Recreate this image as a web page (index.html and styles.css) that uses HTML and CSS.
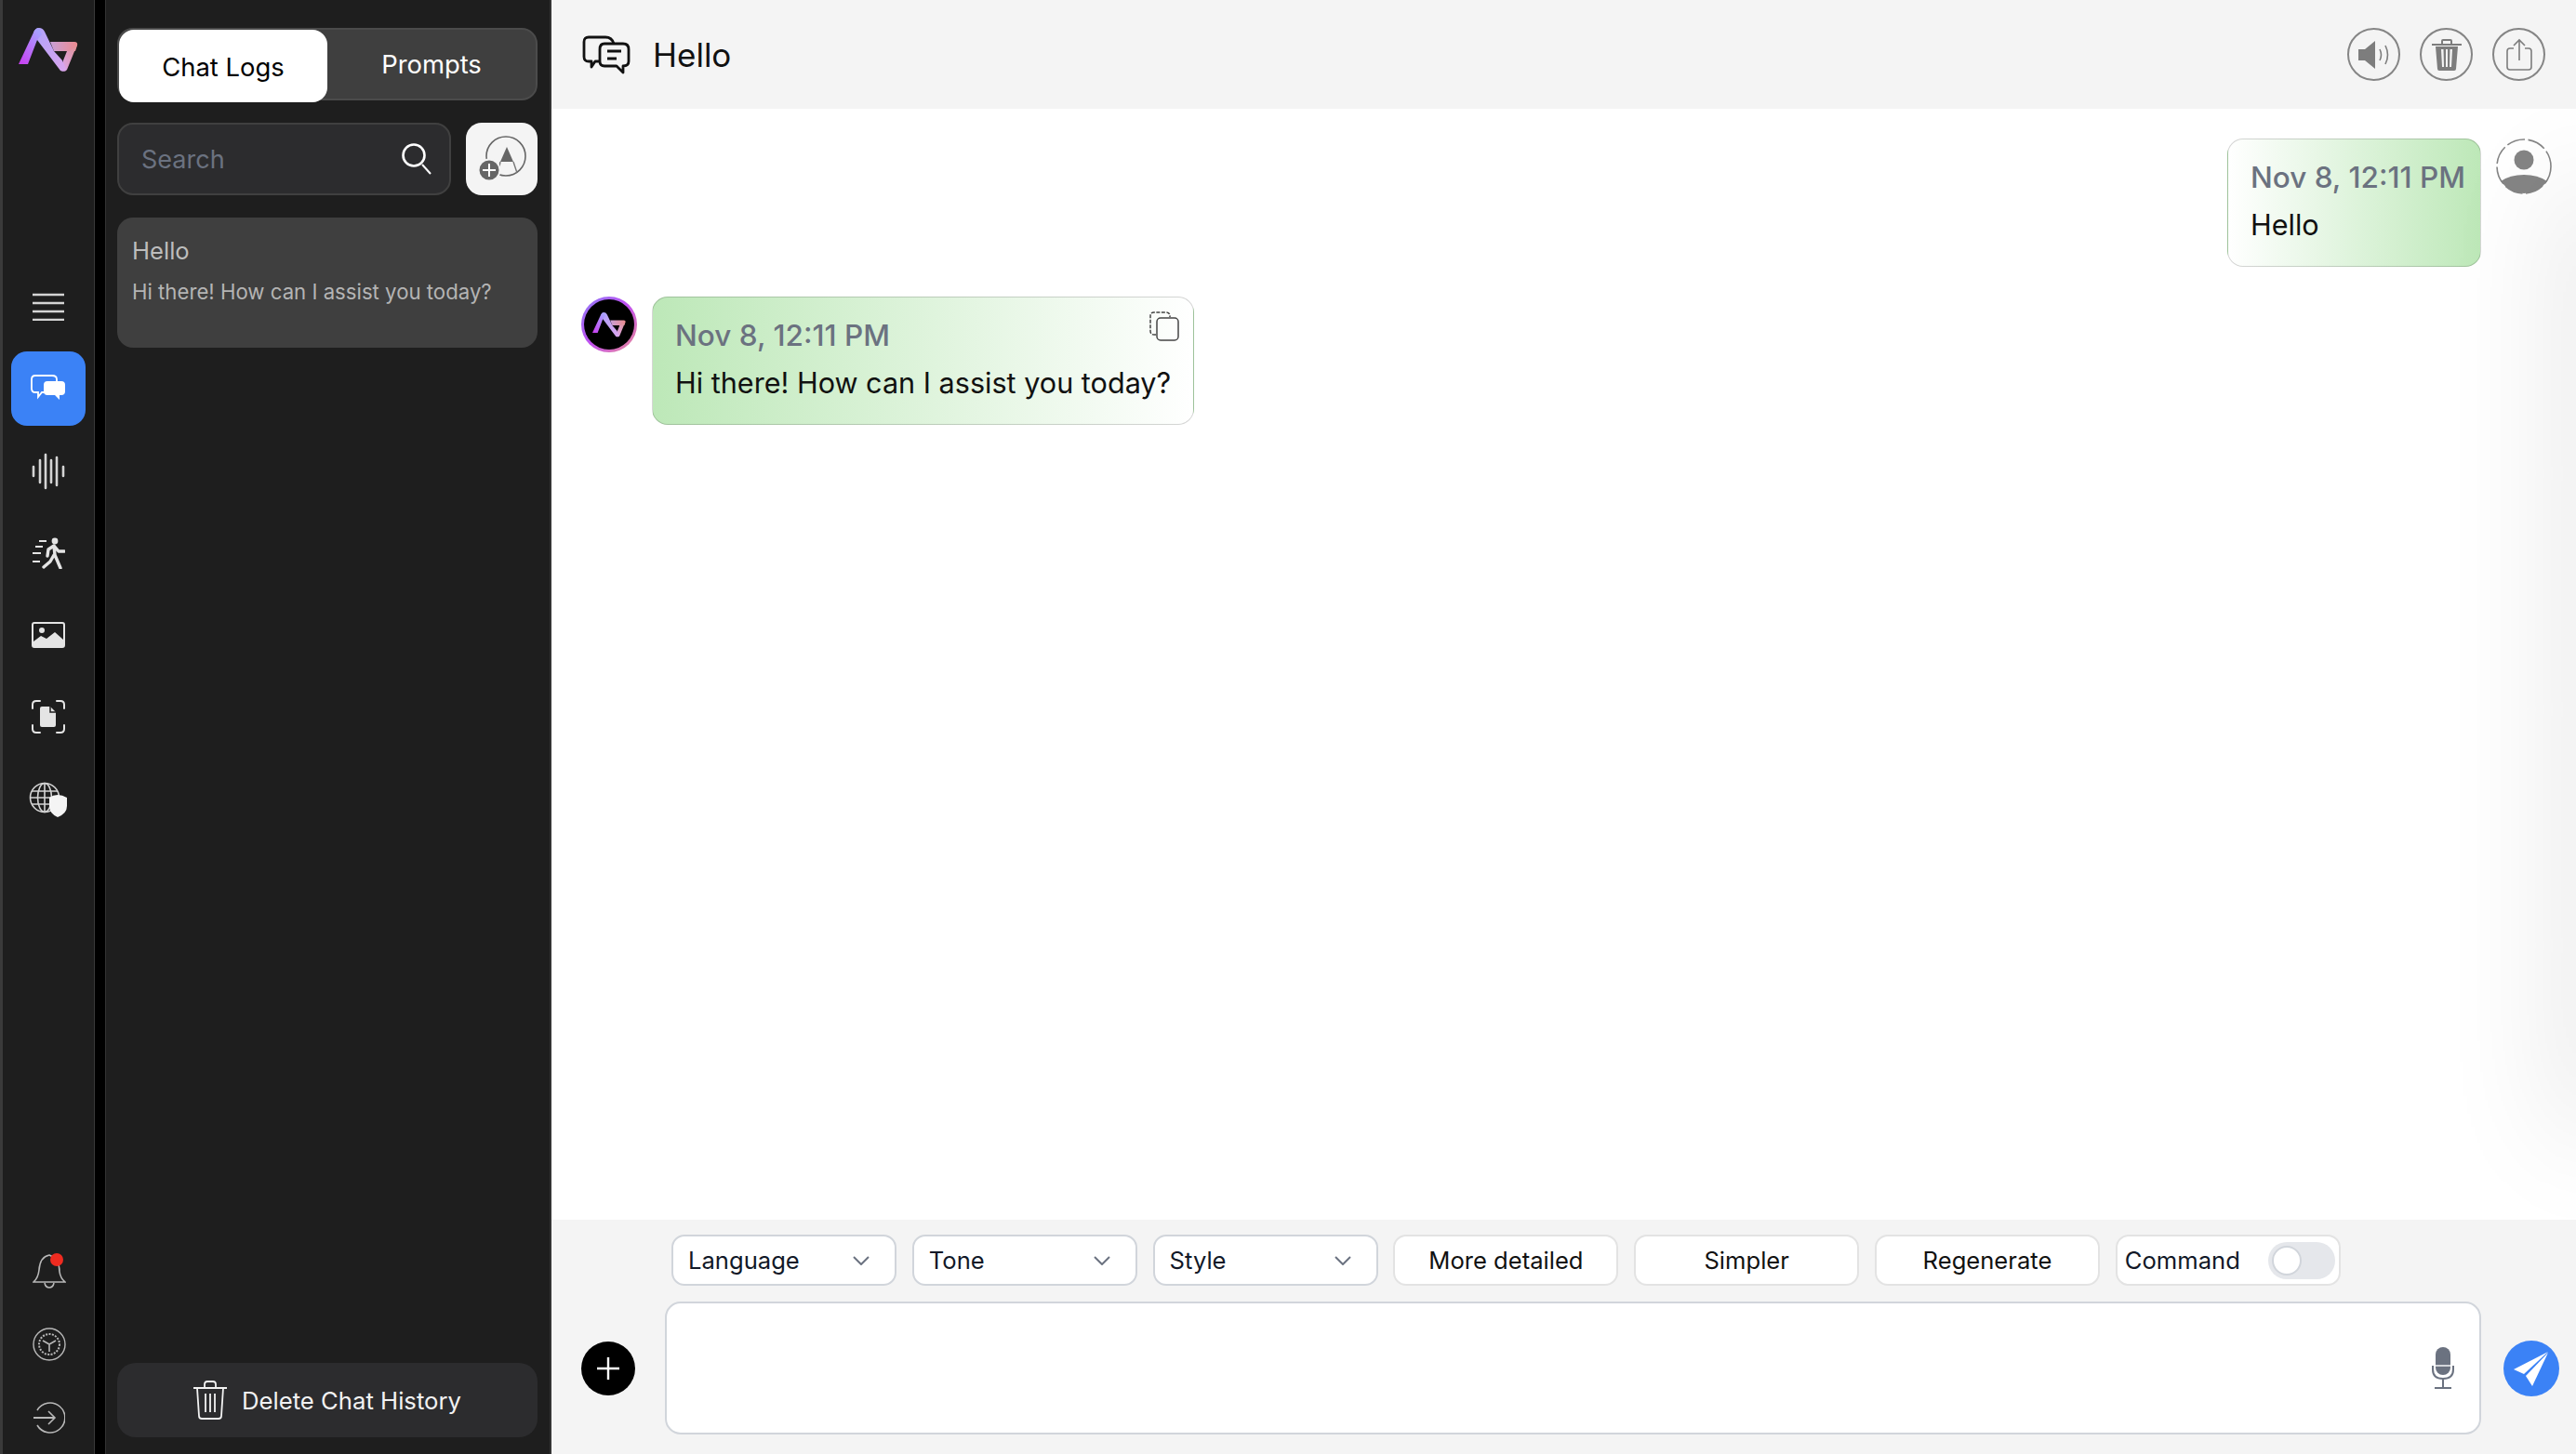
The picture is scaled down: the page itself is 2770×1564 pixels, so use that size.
FILE: index.html
```html
<!DOCTYPE html>
<html lang="en">
<head>
    <meta charset="UTF-8">
    <title>Chat</title>
    <link rel="stylesheet" href="styles.css">
</head>
<body>
    <svg class="defs" width="0" height="0">
        <defs>
            <linearGradient id="legA" x1="0" y1="1" x2="0.7" y2="0">
                <stop offset="0" stop-color="#c93cf0"/>
                <stop offset="1" stop-color="#a8a0ff"/>
            </linearGradient>
            <linearGradient id="legB" x1="0" y1="0" x2="1" y2="1">
                <stop offset="0" stop-color="#aea2fb"/>
                <stop offset="1" stop-color="#dba6ee"/>
            </linearGradient>
            <linearGradient id="legC" x1="0" y1="0" x2="1" y2="0">
                <stop offset="0" stop-color="#c79fd8"/>
                <stop offset="1" stop-color="#ec8a8e"/>
            </linearGradient>
            <linearGradient id="legD" x1="0" y1="1" x2="1" y2="0">
                <stop offset="0" stop-color="#dba6ee"/>
                <stop offset="1" stop-color="#e0908f"/>
            </linearGradient>
            <symbol id="logo" viewBox="0 0 64 48">
                <path d="M34 15H60Q64 15 63 19L61 25H38Z" fill="url(#legC)"/>
                <path d="M63 18L52 45Q50 48 47 46L48 35L52 25H55Z" fill="url(#legD)"/>
                <path d="M22 0Q26 0 28 4L38 25L47 35L51 44Q49 48 45 46L20 13L16 5Q18 0 22 0Z" fill="url(#legB)"/>
                <path d="M0 39L16 5Q18 0 22 0L25 7L20 13L10 39Z" fill="url(#legA)"/>
            </symbol>
        </defs>
    </svg>

    <div class="app">
        <nav class="rail">
            <a class="rail-logo"><svg width="64" height="48"><use href="#logo"/></svg></a>
            <div class="rail-top">
                <a class="rail-item">
                    <svg width="36" height="30" viewBox="0 0 36 30" fill="none" stroke="#d4d4d4" stroke-width="2.4"><path d="M1 2H35M1 11H35M1 20H35M1 29H35"/></svg>
                </a>
                <a class="rail-item active">
                    <svg width="38" height="30" viewBox="0 0 38 30" fill="none" stroke="#fff" stroke-width="1.8">
                        <path d="M5 1H23Q28 1 28 5V15Q28 19 23 19H12L8 24V19H5Q1 19 1 15V5Q1 1 5 1Z"/>
                        <path d="M18 7H33Q37 7 37 11V18Q37 22 33 22H31L31 27L26 22H18Q14 22 14 18V11Q14 7 18 7Z" fill="#fff" stroke="none"/>
                    </svg>
                </a>
                <a class="rail-item">
                    <svg width="36" height="40" viewBox="0 0 36 40" fill="none" stroke="#d4d4d4" stroke-width="2.6" stroke-linecap="round"><path d="M2 15V25M9 8V32M15 2V38M21 8V32M27 5V35M34 15V25"/></svg>
                </a>
                <a class="rail-item">
                    <svg width="36" height="34" viewBox="0 0 36 34" fill="none" stroke="#e4e4e4" stroke-width="2">
                        <circle cx="25" cy="4" r="3.4" fill="#e4e4e4" stroke="none"/>
                        <path d="M8 4H16M4 10H12M1 17H10M1 26H9"/>
                        <path d="M24 9L18 13L17 20M24 9L25 19L31 33M24 9L29 15H35M24 19L20 26L13 32" stroke-width="3.4" stroke-linecap="round" stroke-linejoin="round"/>
                    </svg>
                </a>
                <a class="rail-item">
                    <svg width="36" height="28" viewBox="0 0 36 28" fill="none">
                        <rect x="1" y="1" width="34" height="26" rx="2" stroke="#e4e4e4" stroke-width="2"/>
                        <circle cx="11" cy="9" r="3" fill="#e4e4e4"/>
                        <path d="M2 26V21L10 15L16 18L25 11L34 19V26Z" fill="#e4e4e4"/>
                    </svg>
                </a>
                <a class="rail-item">
                    <svg width="36" height="36" viewBox="0 0 36 36" fill="none">
                        <path d="M1 9V5Q1 1 5 1H9M27 1H31Q35 1 35 5V9M35 27V31Q35 35 31 35H27M9 35H5Q1 35 1 31V27" stroke="#e4e4e4" stroke-width="2" stroke-linecap="round"/>
                        <path d="M11 7H20L26 13V27Q26 29 24 29H11Q9 29 9 27V9Q9 7 11 7Z" fill="#e4e4e4"/>
                        <path d="M20 7V13H26" fill="none" stroke="#1e1e1e" stroke-width="1.5"/>
                    </svg>
                </a>
                <a class="rail-item">
                    <svg width="42" height="38" viewBox="0 0 42 38" fill="none" stroke="#d4d4d4" stroke-width="1.6">
                        <circle cx="17" cy="17" r="15.5"/>
                        <ellipse cx="17" cy="17" rx="7.5" ry="15.5"/>
                        <path d="M17 2V32M3 10H31M2 17H32M3 24H31"/>
                        <path d="M31 14Q36 14 41 17V26Q41 34 31 38Q22 34 22 26V17Q26 14 31 14Z" fill="#f4f4f4" stroke="none"/>
                    </svg>
                </a>
            </div>
            <div class="rail-bottom">
                <a class="rail-sm">
                    <svg width="36" height="38" viewBox="0 0 36 38" fill="none" stroke="#b8b8b8" stroke-width="1.6">
                        <path d="M1 31H35Q30 27 29 20Q29 6 18 2Q8 4 7 18Q6 27 1 31Z"/>
                        <path d="M13 32Q14 37 18 37Q22 37 23 32"/>
                    </svg>
                    <span class="dot"></span>
                </a>
                <a class="rail-sm">
                    <svg width="36" height="36" viewBox="0 0 36 36" fill="none" stroke="#b8b8b8" stroke-width="1.4">
                        <circle cx="18" cy="18" r="17"/>
                        <circle cx="18" cy="18" r="11" stroke-width="2" stroke-dasharray="2 1.4"/>
                        <path d="M18 18L25 14M18 18L11 14M18 18V26" stroke-width="1.6"/>
                    </svg>
                </a>
                <a class="rail-sm">
                    <svg width="34" height="34" viewBox="0 0 34 34" fill="none" stroke="#b8b8b8" stroke-width="1.6">
                        <path d="M4 9A16 16 0 1 1 4 25"/>
                        <path d="M0 17H22" stroke-width="2"/>
                        <path d="M16 10L23 17L16 24"/>
                    </svg>
                </a>
            </div>
        </nav>

        <aside class="panel">
            <div class="tabs">
                <a class="tab on">Chat Logs</a>
                <a class="tab">Prompts</a>
            </div>
            <div class="search-row">
                <div class="search">
                    <input class="search-input" placeholder="Search">
                    <svg width="34" height="36" viewBox="0 0 34 36" fill="none" stroke="#fff">
                        <circle cx="14" cy="14" r="11.5" stroke-width="2.6"/>
                        <path d="M23 24L32 34" stroke-width="2"/>
                    </svg>
                </div>
                <a class="new-chat">
                    <svg width="52" height="50" viewBox="0 0 52 50" fill="none">
                        <circle cx="30" cy="22" r="21" stroke="#666" stroke-width="1.6"/>
                        <path d="M31 12L38 28H24Z" fill="#666"/>
                        <path d="M24 28L21 42M38 28L42 40" stroke="#777" stroke-width="1.4"/>
                        <circle cx="12" cy="37" r="11.5" fill="#666" stroke="#f4f4f4" stroke-width="2"/>
                        <path d="M12 30V44M5 37H19" stroke="#fff" stroke-width="2"/>
                    </svg>
                </a>
            </div>
            <div class="log-card">
                <div class="log-title">Hello</div>
                <div class="log-sub">Hi there! How can I assist you today?</div>
            </div>
            <a class="delete-all">
                <svg width="36" height="42" viewBox="0 0 36 42" fill="none" stroke="#f2f2f2" stroke-width="1.8">
                    <path d="M0 8H36M12 8V4Q12 1 15 1H21Q24 1 24 4V8M4 8L6 38Q6 41 9 41H27Q30 41 30 38L32 8M13 14V34M18 14V34M23 14V34"/>
                </svg>
                Delete Chat History
            </a>
        </aside>

        <main class="main">
            <header class="head">
                <div class="head-title">
                    <svg width="52" height="42" viewBox="0 0 52 42" fill="none" stroke="#111" stroke-width="2.8" stroke-linejoin="round">
                        <path d="M20 28H14L10 34V28H7Q2 28 2 23V7Q2 2 7 2H25Q32 2 34 9"/>
                        <path d="M24 9H44Q50 9 50 15V28Q50 33 44 33V40L37 33H24Q19 33 19 28V15Q19 9 24 9Z"/>
                        <path d="M27 17H42M27 25H37"/>
                    </svg>
                    <span>Hello</span>
                </div>
                <div class="head-btns">
                    <a class="round-btn">
                        <svg width="36" height="34" viewBox="0 0 36 34" fill="#7d7d7d">
                            <path d="M1 11H8L19 2V32L8 23H1Z"/>
                            <path d="M24 11Q27 17 24 23M30 7Q35 17 30 27" fill="none" stroke="#7d7d7d" stroke-width="1.6"/>
                        </svg>
                    </a>
                    <a class="round-btn">
                        <svg width="32" height="36" viewBox="0 0 32 36" fill="#7d7d7d">
                            <path d="M0 6H32V8H0ZM10 6V3Q10 1 12 1H20Q22 1 22 3V6H20V3H12V6Z"/>
                            <path d="M4 9H28L26 33Q26 35 24 35H8Q6 35 6 33ZM10 12L11 31H13L12.5 12ZM15 12V31H17V12ZM19.5 12L19 31H21L22 12Z" fill-rule="evenodd"/>
                        </svg>
                    </a>
                    <a class="round-btn">
                        <svg width="28" height="36" viewBox="0 0 28 36" fill="none" stroke="#7d7d7d" stroke-width="1.6">
                            <path d="M8 11H4Q1 11 1 14V31Q1 34 4 34H24Q27 34 27 31V14Q27 11 24 11H20"/>
                            <path d="M14 24V2M8 8L14 2L20 8"/>
                        </svg>
                    </a>
                </div>
            </header>

            <section class="messages">
                <div class="msg mine">
                    <div class="bubble to-left">
                        <div class="stamp">Nov 8, 12:11 PM</div>
                        <div class="text">Hello</div>
                    </div>
                    <svg class="avatar" width="60" height="60" viewBox="0 0 60 60">
                        <circle cx="30" cy="30" r="29" fill="none" stroke="#858585" stroke-width="1.6" stroke-dasharray="20 3.5"/>
                        <circle cx="30" cy="23" r="10.5" fill="#858585"/>
                        <path d="M5 46Q15 39 30 39Q45 39 55 46Q45 59 30 59Q15 59 5 46Z" fill="#858585"/>
                    </svg>
                </div>
                <div class="msg">
                    <div class="avatar bot">
                        <svg width="36" height="27"><use href="#logo"/></svg>
                    </div>
                    <div class="bubble to-right">
                        <div class="stamp">Nov 8, 12:11 PM</div>
                        <div class="text">Hi there! How can I assist you today?</div>
                        <svg class="copy" width="32" height="32" viewBox="0 0 32 32" fill="none" stroke="#444" stroke-width="1.5">
                            <path d="M7 25H5Q1 25 1 21V5Q1 1 5 1H18Q22 1 22 5V6" stroke-dasharray="4 1.5"/>
                            <rect x="8" y="7" width="23" height="24" rx="4"/>
                        </svg>
                    </div>
                </div>
            </section>

            <footer class="composer">
                <div class="tools">
                    <a class="tool drop">Language<svg width="18" height="10" viewBox="0 0 18 10" fill="none" stroke="#6b7280" stroke-width="2"><path d="M1 1L9 9L17 1"/></svg></a>
                    <a class="tool drop">Tone<svg width="18" height="10" viewBox="0 0 18 10" fill="none" stroke="#6b7280" stroke-width="2"><path d="M1 1L9 9L17 1"/></svg></a>
                    <a class="tool drop">Style<svg width="18" height="10" viewBox="0 0 18 10" fill="none" stroke="#6b7280" stroke-width="2"><path d="M1 1L9 9L17 1"/></svg></a>
                    <a class="tool soft">More detailed</a>
                    <a class="tool soft">Simpler</a>
                    <a class="tool soft">Regenerate</a>
                    <div class="tool soft command">Command<span class="toggle"><span class="knob"></span></span></div>
                </div>
                <div class="input-row">
                    <a class="plus">
                        <svg width="24" height="24" viewBox="0 0 24 24" stroke="#fff" stroke-width="2.4"><path d="M12 0V24M0 12H24"/></svg>
                    </a>
                    <div class="input-box">
                        <svg width="24" height="45" viewBox="0 0 24 45" fill="none">
                            <rect x="4" y="0" width="16" height="30" rx="8" fill="#6b7280"/>
                            <path d="M1 20V24Q1 34 12 34Q23 34 23 24V20M12 34V43M3 44H21" stroke="#6b7280" stroke-width="2"/>
                            <path d="M4 20H20" stroke="#fff" stroke-width="1.4"/>
                        </svg>
                    </div>
                    <a class="send">
                        <svg width="38" height="38" viewBox="0 0 38 38" fill="#fff">
                            <path d="M37 1L0 20L11 25Z"/>
                            <path d="M37 2L13 27L20 38Z"/>
                        </svg>
                    </a>
                </div>
            </footer>
        </main>
    </div>
</body>
</html>
```

FILE: styles.css
```css
* {
    box-sizing: border-box;
}
html, body {
    margin: 0;
    height: 100%;
}
body {
    font-family: Inter, "Liberation Sans", sans-serif;
    background: #fff;
    color: #111;
    overflow: hidden;
}
.defs {
    position: absolute;
}
.app {
    display: flex;
    height: 1564px;
}

/* left icon rail */
.rail {
    width: 113px;
    flex: none;
    background: #1e1e1e;
    border-left: 3px solid #3a3a3a;
    border-right: 11px solid #000;
    box-shadow: inset -1px 0 #3a3a3a;
    display: flex;
    flex-direction: column;
    padding-top: 30px;
}
.rail-logo {
    height: 48px;
    margin-left: 17px;
}
.rail-top {
    margin-top: 212px;
    display: flex;
    flex-direction: column;
    gap: 8.3px;
}
.rail-item {
    width: 80px;
    height: 80px;
    margin-left: 9px;
    border-radius: 17px;
    display: flex;
    align-items: center;
    justify-content: center;
}
.rail-item.active {
    background: #3b82f6;
}
.rail-bottom {
    margin-top: auto;
    padding-bottom: 20px;
    display: flex;
    flex-direction: column;
    gap: 44px;
    align-items: center;
}
.rail-sm {
    position: relative;
    display: flex;
    height: 36px;
}
.dot {
    position: absolute;
    top: 0;
    right: 3px;
    width: 14px;
    height: 14px;
    border-radius: 50%;
    background: #ef2b20;
}

/* chat list */
.panel {
    width: 480px;
    flex: none;
    background: #1e1e1e;
    border-left: 1px solid #333;
    border-right: 2px solid #333;
    padding: 30px 13px 18px 12px;
    display: flex;
    flex-direction: column;
}
.tabs {
    display: flex;
    height: 78px;
    background: #3f3f3f;
    border: 2px solid #4b4b4b;
    border-radius: 17px;
}
.tab {
    flex: 1;
    display: flex;
    align-items: center;
    justify-content: center;
    font-size: 27.4px;
    color: #fff;
}
.tab.on {
    background: #fff;
    color: #000;
    border-radius: 16px;
    height: 78px;
    flex: none;
    width: 224px;
    padding-top: 2px;
}
.search-row {
    display: flex;
    gap: 16px;
    margin-top: 24px;
}
.search {
    flex: 1;
    min-width: 0;
    height: 78px;
    display: flex;
    align-items: center;
    padding: 0 18px 0 24px;
    background: #2c2c2e;
    border: 2px solid #404040;
    border-radius: 17px;
}
.search-input {
    flex: 1;
    min-width: 0;
    padding: 0;
    border: none;
    outline: none;
    background: none;
    font: 27px Inter, sans-serif;
    color: #fff;
}
.search-input::placeholder {
    color: #6b7280;
}
.new-chat {
    width: 77px;
    height: 78px;
    flex: none;
    background: #f4f4f4;
    border-radius: 17px;
    display: flex;
    align-items: center;
    justify-content: center;
}
.log-card {
    margin-top: 24px;
    height: 140px;
    background: #3f3f3f;
    border-radius: 17px;
    padding: 18px 16px;
}
.log-title {
    font-size: 25.6px;
    color: #bdbdbd;
    line-height: 36px;
}
.log-sub {
    font-size: 22.2px;
    color: #b4b4b4;
    line-height: 32px;
    margin-top: 10px;
    white-space: nowrap;
}
.delete-all {
    margin-top: auto;
    height: 80px;
    background: #2c2c2e;
    border-radius: 20px;
    display: flex;
    align-items: center;
    justify-content: center;
    gap: 16px;
    font-size: 25.7px;
    color: #f2f2f2;
}

/* main column */
.main {
    flex: 1;
    min-width: 0;
    display: flex;
    flex-direction: column;
}
.head {
    height: 117px;
    flex: none;
    background: #f4f4f4;
    display: flex;
    align-items: center;
    justify-content: space-between;
    padding: 0 33px 0 33px;
}
.head-title {
    display: flex;
    align-items: center;
    gap: 24px;
    font-size: 35px;
}
.head-btns {
    display: flex;
    gap: 21px;
}
.round-btn {
    width: 57px;
    height: 57px;
    border-radius: 50%;
    border: 2px solid #858585;
    display: flex;
    align-items: center;
    justify-content: center;
}
.messages {
    flex: 1;
    position: relative;
    overflow: hidden;
    padding: 32px 26px 0 32px;
    display: flex;
    flex-direction: column;
    gap: 32px;
}
/* grey fade along the right edge */
.messages::after {
    content: "";
    position: absolute;
    top: 80px;
    bottom: 90px;
    right: -40px;
    width: 40px;
    box-shadow: 0 0 130px rgba(0, 0, 0, .2);
}
.msg {
    display: flex;
    gap: 16px;
    align-items: flex-start;
}
.msg.mine {
    justify-content: flex-end;
}
.bubble {
    position: relative;
    height: 138px;
    padding: 17px 24px 0;
    border: 1px solid rgba(0, 0, 0, .16);
    border-radius: 17px;
}
.to-left {
    padding-right: 16px;
    background: linear-gradient(to right, #fff, #bde8b8);
}
.to-right {
    background: linear-gradient(to right, #bde8b8, #fff);
}
.stamp {
    font-size: 31.5px;
    line-height: 48px;
    color: #6b7280;
    font-weight: 500;
}
.text {
    font-size: 30.6px;
    line-height: 54px;
    color: #111;
}
.copy {
    position: absolute;
    top: 15px;
    right: 15px;
}
.avatar {
    width: 60px;
    height: 60px;
    flex: none;
}
.avatar.bot {
    border-radius: 50%;
    border: 3px solid transparent;
    background-image: linear-gradient(#000, #000), linear-gradient(135deg, #8f7cf8, #c04ef0 50%, #ea8c92);
    background-origin: border-box;
    background-clip: padding-box, border-box;
    display: flex;
    align-items: center;
    justify-content: center;
}

/* composer */
.composer {
    height: 252px;
    flex: none;
    background: #f4f4f4;
    padding: 16px 18px 21px 32px;
}
.tools {
    display: flex;
    gap: 16.8px;
    margin-left: 97px;
}
.tool {
    width: 242px;
    height: 55px;
    background: #fff;
    border: 2px solid #d1d5db;
    border-radius: 14px;
    font-size: 25.6px;
    color: #111827;
    display: flex;
    align-items: center;
}
.drop {
    padding: 0 27px 0 16px;
    justify-content: space-between;
}
.soft {
    justify-content: center;
    border-color: #e3e3e3;
    color: #111;
}
.command {
    justify-content: space-between;
    padding: 0 4px 0 8px;
    color: #111827;
}
.toggle {
    width: 72px;
    height: 40px;
    background: #e5e7eb;
    border-radius: 20px;
    padding: 4px;
    display: flex;
}
.knob {
    width: 32px;
    height: 32px;
    background: #fff;
    border: 2px solid #d1d5db;
    border-radius: 50%;
}
.input-row {
    display: flex;
    align-items: center;
    margin-top: 17px;
}
.plus, .send {
    border-radius: 50%;
    display: flex;
    align-items: center;
    justify-content: center;
    flex: none;
}
.plus {
    width: 58px;
    height: 58px;
    background: #000;
}
.input-box {
    flex: 1;
    height: 143px;
    margin: 0 24px 0 32px;
    background: #fff;
    border: 2px solid #d1d5db;
    border-radius: 17px;
    display: flex;
    align-items: center;
    justify-content: flex-end;
    padding-right: 27px;
}
.send {
    width: 60px;
    height: 60px;
    background: #3b82f6;
}
```
